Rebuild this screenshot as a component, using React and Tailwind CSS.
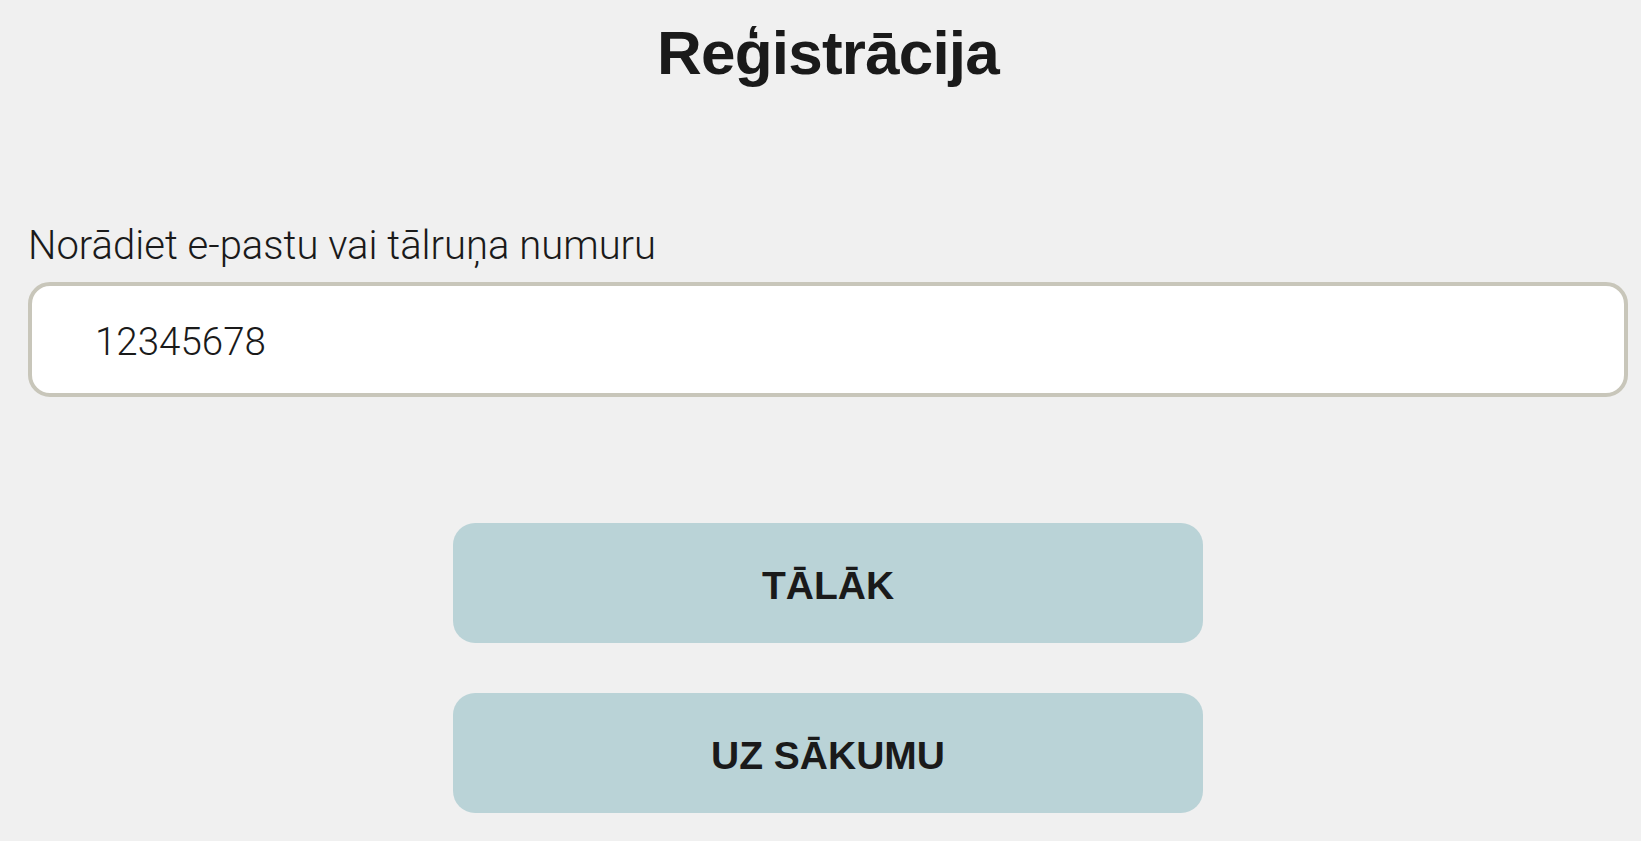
import React, { useState } from "react";

const App = () => {
  const [contact, setContact] = useState("12345678");

  return (
    <div className="min-h-[841px] w-full bg-[#f0f0f0] pl-[28px] pr-[13px] pt-[22px] text-[#1a1a1a] font-['Liberation_Sans',Arial,sans-serif]">
      <h1 className="text-center text-[62px] leading-none font-bold tracking-[-0.8px]">
        Reģistrācija
      </h1>

      <div className="mt-[142px]">
        <label
          htmlFor="contact"
          className="block text-[40px] leading-none font-light font-['Roboto','Liberation_Sans',sans-serif]"
        >
          Norādiet e-pastu vai tālruņa numuru
        </label>
        <input
          id="contact"
          type="text"
          value={contact}
          onChange={(e) => setContact(e.target.value)}
          className="mt-[16px] block h-[115px] w-full rounded-[22px] border-4 border-[#c8c6ba] bg-white pl-[63px] pt-1 text-[38.5px] font-light leading-none outline-none font-['Roboto','Liberation_Sans',sans-serif]"
        />
      </div>

      <div className="mt-[126px] flex flex-col items-center gap-[50px]">
        <button
          type="button"
          className="h-[120px] w-[750px] rounded-[22px] bg-[#bad3d7] pt-1 text-[39px] font-bold leading-none"
        >
          TĀLĀK
        </button>
        <button
          type="button"
          className="h-[120px] w-[750px] rounded-[22px] bg-[#bad3d7] pt-1 text-[39px] font-bold leading-none"
        >
          UZ SĀKUMU
        </button>
      </div>
    </div>
  );
};

export default App;
